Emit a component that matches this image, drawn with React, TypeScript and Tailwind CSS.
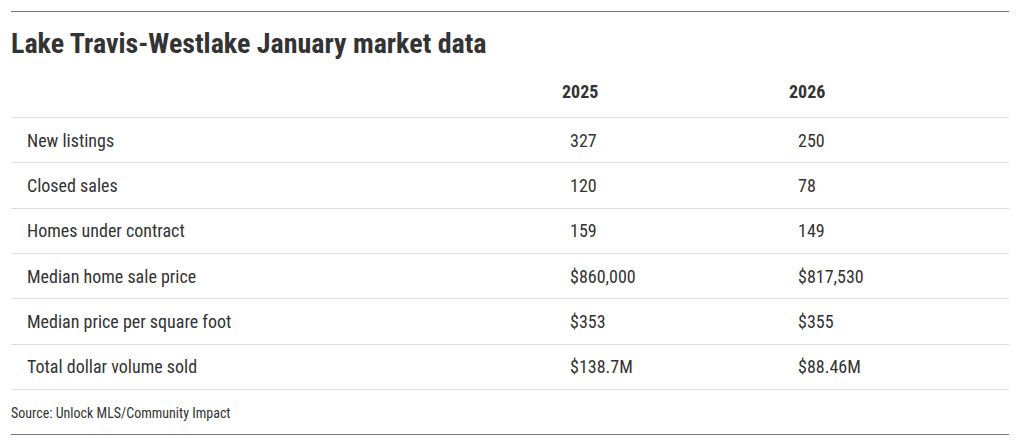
const rows = [
  { label: "New listings", a: "327", b: "250" },
  { label: "Closed sales", a: "120", b: "78" },
  { label: "Homes under contract", a: "159", b: "149" },
  { label: "Median home sale price", a: "$860,000", b: "$817,530" },
  { label: "Median price per square foot", a: "$353", b: "$355" },
  { label: "Total dollar volume sold", a: "$138.7M", b: "$88.46M" },
];

export default function App() {
  return (
    <div className="min-h-[445px] bg-white px-[11px] pt-[11px] text-[#333] font-['Roboto',sans-serif] font-stretch-condensed">
      <div className="w-[998px] border-t border-[#777]">
        <h1 className="pt-[15px] text-[28px] font-bold leading-[34px]">
          Lake Travis-Westlake January market data
        </h1>

        <div className="grid grid-cols-[543px_228px_1fr] h-[57px] items-end pb-[12px] border-b border-[#ddd] text-[18px] font-bold">
          <div />
          <div className="pl-2">2025</div>
          <div className="pl-[7px]">2026</div>
        </div>

        {rows.map((r) => (
          <div
            key={r.label}
            className="grid grid-cols-[543px_228px_1fr] h-[45.34px] items-center border-b border-[#ddd] text-[18px]"
          >
            <div className="pl-4">{r.label}</div>
            <div className="pl-4">{r.a}</div>
            <div className="pl-4">{r.b}</div>
          </div>
        ))}

        <p className="h-[45px] border-b border-[#777] pt-[13px] text-[14px]">
          Source: Unlock MLS/Community Impact
        </p>
      </div>
    </div>
  );
}
